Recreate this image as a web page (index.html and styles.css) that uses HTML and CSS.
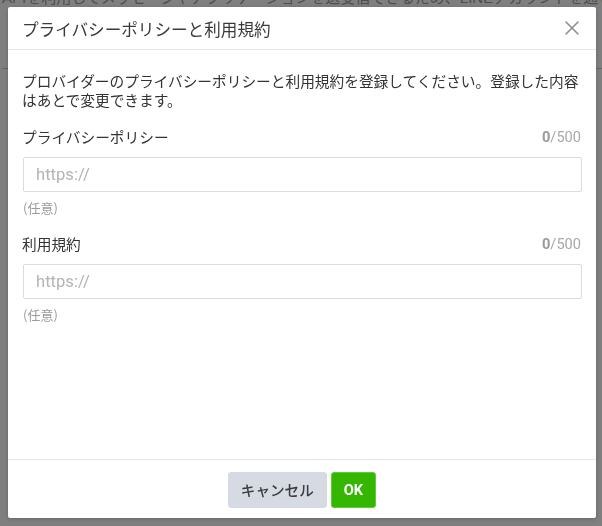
FILE: index.html
```html
<!DOCTYPE html>
<html lang="ja">
<head>
<meta charset="utf-8">
<title>プライバシーポリシーと利用規約</title>
<link rel="stylesheet" href="styles.css">
</head>
<body>
<div class="page">
  <div class="page-clip">
    <p class="page-text">APIを利用してメッセージやアプリケーションを送受信できるため、LINEアカウントを通じた二</p>
  </div>
  <div class="page-rule"></div>
</div>
<div class="overlay">
  <div class="modal" role="dialog">
    <div class="modal-header">
      <h2 class="modal-title">プライバシーポリシーと利用規約</h2>
      <button class="close" aria-label="閉じる">
        <svg width="14" height="14" viewBox="0 0 14 14"><path d="M1 1L13 13M13 1L1 13" stroke="#8e8e8e" stroke-width="1.6" fill="none" stroke-linecap="round"/></svg>
      </button>
    </div>
    <div class="modal-body">
      <p class="desc">プロバイダーのプライバシーポリシーと利用規約を登録してください。登録した内容はあとで変更できます。</p>
      <div class="field">
        <div class="field-head">
          <span class="label">プライバシーポリシー</span>
          <span class="count"><b>0</b>/500</span>
        </div>
        <input class="input" type="text" placeholder="https://">
        <div class="note">(任意)</div>
      </div>
      <div class="field">
        <div class="field-head">
          <span class="label">利用規約</span>
          <span class="count"><b>0</b>/500</span>
        </div>
        <input class="input" type="text" placeholder="https://">
        <div class="note">(任意)</div>
      </div>
    </div>
    <div class="modal-footer">
      <button class="btn btn-cancel">キャンセル</button>
      <button class="btn btn-ok">OK</button>
    </div>
  </div>
</div>
</body>
</html>
```

FILE: styles.css
```css
html, body {
  margin: 0;
  padding: 0;
  height: 100%;
}
body {
  background: #ffffff;
  font-family: "Liberation Sans", "Noto Sans CJK JP", sans-serif;
  color: #333;
  overflow: hidden;
}
.page {
  padding: 0 0 0 2px;
}
.page-clip {
  height: 7px;
  overflow: hidden;
}
.page-text {
  margin: -10px 0 0 0;
  font-family: "Liberation Sans", "Noto Sans CJK JP", sans-serif;
  font-size: 15px;
  line-height: 16px;
  color: #9a9a9a;
  white-space: nowrap;
}
.page-rule {
  margin-top: 61px;
  border-top: 1px solid #c8c8c8;
}
.overlay {
  position: fixed;
  inset: 0;
  background: rgba(0, 0, 0, 0.5);
  display: flex;
  justify-content: center;
  align-items: flex-start;
  padding: 7px 0 0 2px;
}
.modal {
  width: 588px;
  height: 511px;
  background: #fff;
  border-radius: 2px;
  display: flex;
  flex-direction: column;
  box-shadow: 0 1px 4px rgba(0,0,0,0.2);
}
.modal-header {
  height: 42px;
  border-bottom: 1px solid #e6e6e6;
  display: flex;
  align-items: center;
  justify-content: space-between;
  padding: 0 17px 0 14px;
  flex: none;
}
.modal-title {
  margin: 0;
  font-family: "Noto Sans CJK JP", sans-serif;
  font-weight: 400;
  font-size: 16.6px;
  color: #3a3a3a;
  line-height: 20px;
  padding-top: 1px;
}
.close {
  border: 0;
  background: none;
  padding: 0;
  width: 14px;
  height: 14px;
  display: flex;
  cursor: pointer;
}
.modal-body {
  flex: 1;
  padding: 21px 15px 0 14px;
}
.desc {
  margin: 0;
  font-family: "Noto Sans CJK JP", sans-serif;
  font-size: 14.7px;
  line-height: 19px;
  color: #333;
}
.field {
  margin-top: 18px;
}
.field-head {
  display: flex;
  justify-content: space-between;
  align-items: center;
  height: 19px;
  margin-bottom: 11px;
}
.label {
  font-family: "Noto Sans CJK JP", sans-serif;
  font-size: 14.7px;
  line-height: 19px;
  color: #333;
}
.count {
  font-family: Roboto, "Liberation Sans", sans-serif;
  font-size: 14.6px;
  color: #a8a8a8;
}
.count b {
  font-weight: 700;
  color: #9a9a9a;
}
.input {
  display: block;
  box-sizing: border-box;
  width: 100%;
  height: 35px;
  margin: 0 0 0 1px;
  padding: 0 12px;
  border: 1px solid #dcdcdc;
  border-radius: 2px;
  font-family: Roboto, "Liberation Sans", sans-serif;
  font-size: 16.6px;
  color: #333;
  outline: none;
}
.input::placeholder {
  color: #b4b4b4;
}
.note {
  margin-top: 8px;
  padding-left: 1px;
  font-family: "Noto Sans CJK JP", sans-serif;
  font-size: 13px;
  line-height: 16px;
  color: #9c9c9c;
}
.modal-footer {
  height: 59px;
  border-top: 1px solid #e6e6e6;
  display: flex;
  justify-content: center;
  align-items: center;
  gap: 4px;
  flex: none;
  padding-top: 1px;
  box-sizing: border-box;
}
.btn {
  height: 36px;
  border-radius: 3px;
  font-family: Roboto, "Noto Sans CJK JP", sans-serif;
  font-size: 14.6px;
  font-weight: 700;
  padding: 0 12px;
  white-space: nowrap;
  cursor: pointer;
}
.btn-cancel {
  border: 1px solid #d5dae3;
  background: #d5dae3;
  color: #3c3c3c;
  font-family: "Noto Sans CJK JP", sans-serif;
  font-weight: 500;
}
.btn-ok {
  border: 1px solid #5fcb35;
  background: #35b600;
  color: #fff;
}
```
